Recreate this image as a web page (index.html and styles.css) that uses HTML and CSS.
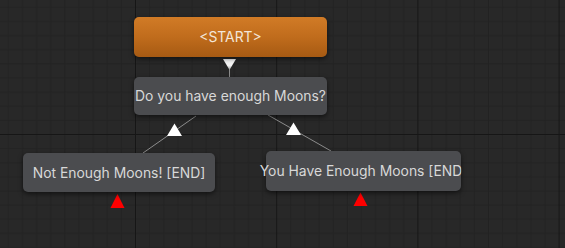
FILE: index.html
```html
<!DOCTYPE html>
<html>
<head>
<meta charset="utf-8">
<link rel="stylesheet" href="styles.css">
</head>
<body>
<div class="canvas">
  <svg class="grid" width="565" height="248" viewBox="0 0 565 248">
    <defs>
      <pattern id="g" patternUnits="userSpaceOnUse" x="135" y="134" width="141.2" height="141.2">
        <g fill="#222222">
          <rect x="14.12" y="0" width="1" height="141.2"/>
          <rect x="28.24" y="0" width="1" height="141.2"/>
          <rect x="42.36" y="0" width="1" height="141.2"/>
          <rect x="56.48" y="0" width="1" height="141.2"/>
          <rect x="70.6" y="0" width="1" height="141.2"/>
          <rect x="84.72" y="0" width="1" height="141.2"/>
          <rect x="98.84" y="0" width="1" height="141.2"/>
          <rect x="112.96" y="0" width="1" height="141.2"/>
          <rect x="127.08" y="0" width="1" height="141.2"/>
          <rect y="14.12" x="0" height="1" width="141.2"/>
          <rect y="28.24" x="0" height="1" width="141.2"/>
          <rect y="42.36" x="0" height="1" width="141.2"/>
          <rect y="56.48" x="0" height="1" width="141.2"/>
          <rect y="70.6" x="0" height="1" width="141.2"/>
          <rect y="84.72" x="0" height="1" width="141.2"/>
          <rect y="98.84" x="0" height="1" width="141.2"/>
          <rect y="112.96" x="0" height="1" width="141.2"/>
          <rect y="127.08" x="0" height="1" width="141.2"/>
        </g>
        <g fill="#161616">
          <rect x="0" y="0" width="1" height="141.2"/>
          <rect x="0" y="0" width="141.2" height="1"/>
        </g>
      </pattern>
      <linearGradient id="tri" x1="0" y1="0" x2="0" y2="1">
        <stop offset="0" stop-color="#ffffff"/>
        <stop offset="0.6" stop-color="#f2f2f2"/>
        <stop offset="1" stop-color="#9a9a9a"/>
      </linearGradient>
    </defs>
    <rect width="565" height="248" fill="#282828"/>
    <rect width="565" height="248" fill="url(#g)"/>
    <g stroke="#8c8c8c" stroke-width="1" fill="none">
      <line x1="229.5" y1="69" x2="229.5" y2="77"/>
      <line x1="196" y1="116" x2="143" y2="153"/>
      <line x1="268" y1="115" x2="331" y2="151"/>
    </g>
    <polygon points="223,59 236,59 229.5,70" fill="url(#tri)"/>
    <polygon points="174.5,123.5 182,136 167,136" fill="#ffffff"/>
    <polygon points="293.5,122.5 301,135 286,135" fill="#ffffff"/>
    <polygon points="117.5,194 124.5,208 110.5,208" fill="#ff0000"/>
    <polygon points="360.5,192.5 367.5,206 353.5,206" fill="#ff0000"/>
  </svg>

  <div class="node node-start" style="left:134px;top:17px;width:193px;height:40px;">
    <span class="label">&lt;START&gt;</span>
  </div>
  <div class="node" style="left:134px;top:77px;width:193px;height:38px;">
    <span class="label">Do you have enough Moons?</span>
  </div>
  <div class="node" style="left:23px;top:153px;width:192px;height:39px;">
    <span class="label">Not Enough Moons! [END]</span>
  </div>
  <div class="node" style="left:266px;top:151px;width:195px;height:40px;">
    <span class="label label-clip">You Have Enough Moons [END]</span>
  </div>
</div>
</body>
</html>
```

FILE: styles.css
```css
html, body {
  margin: 0;
  padding: 0;
  background: #282828;
}

.canvas {
  position: relative;
  width: 565px;
  height: 248px;
  overflow: hidden;
  font-family: Inter, "Noto Sans", sans-serif;
}

.grid {
  position: absolute;
  left: 0;
  top: 0;
  display: block;
}

.node {
  position: absolute;
  box-sizing: border-box;
  display: flex;
  align-items: center;
  justify-content: center;
  background: #4b4c4f;
  border-radius: 5px;
  box-shadow: 0 2px 5px rgba(0, 0, 0, 0.55);
  color: #d8d8d8;
  font-size: 13.9px;
  white-space: nowrap;
}

.node-start {
  background: linear-gradient(to bottom, #d17b26 0%, #c06c1c 50%, #a65a13 100%);
  color: #f3e6d8;
}

.label {
  display: block;
  text-align: center;
}

.label-clip {
  clip-path: inset(-4px 6px -4px -20px);
}
```
